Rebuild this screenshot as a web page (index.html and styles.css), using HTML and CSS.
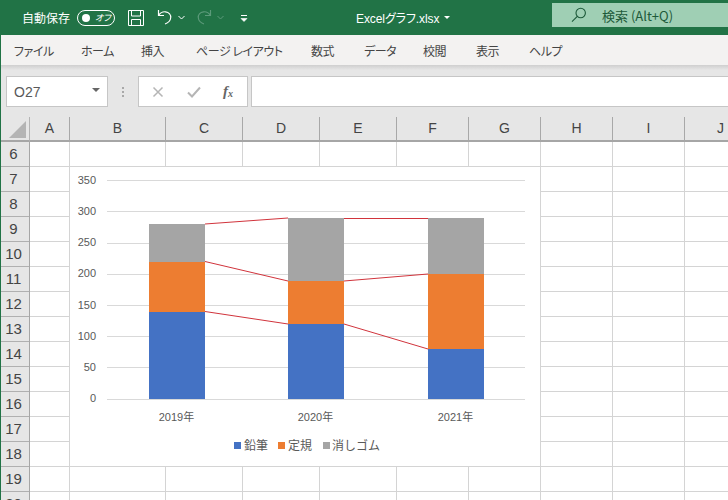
FILE: index.html
```html
<!DOCTYPE html>
<html lang="ja">
<head>
<meta charset="utf-8">
<title>Excelグラフ.xlsx</title>
<link rel="stylesheet" href="styles.css">
</head>
<body>
<div class="app">
  <header class="titlebar">
    <div class="qat">
      <span class="autosave">自動保存</span>
      <span class="toggle"><i class="knob"></i><em class="toggle-label">オフ</em></span>
      <svg class="ico save" width="17" height="17" viewBox="0 0 17 17" fill="none" stroke="#fff" stroke-width="1"><path d="M1.500 1.500h15v15h-15zM4.500 1.500v5.500h9v-5.500M4.500 16.500v-6h9v6"/></svg>
      <svg class="ico undo" width="16" height="17" viewBox="0 0 16 17" fill="none" stroke="#fff" stroke-width="1.2"><path d="M1.500 1v5.500h5.500M1.800 6.200C3.500 3.500 6 2.500 8.500 2.800c3.500.5 5.500 3.200 5.200 6-.3 3-2.600 5.200-5.700 6.200"/></svg>
      <svg class="ico chev" width="7" height="5" viewBox="0 0 7 5" fill="none" stroke="#fff"><path d="M.5 1l3 3 3-3"/></svg>
      <svg class="ico redo" width="16" height="17" viewBox="0 0 16 17" fill="none" stroke="#5c9a7a" stroke-width="1.2"><path d="M14.500 1v5.500H9M14.200 6.200C12.500 3.500 10 2.500 7.500 2.800c-3.500.5-5.500 3.200-5.200 6 .3 3 2.600 5.200 5.700 6.200"/></svg>
      <svg class="ico chev" width="7" height="5" viewBox="0 0 7 5" fill="none" stroke="#5c9a7a"><path d="M.5 1l3 3 3-3"/></svg>
      <svg class="ico custom" width="8" height="8" viewBox="0 0 8 8" fill="none" stroke="#fff"><path d="M1 .5h6"/><path d="M1 3.500l3 3 3-3z" fill="#fff" stroke-width=".6"/></svg>
    </div>
    <div class="doc"><span>Excelグラフ.xlsx</span><i class="caret"></i></div>
    <div class="search">
      <svg class="ico" width="16" height="16" viewBox="0 0 16 16" fill="none" stroke="#1d5a3a" stroke-width="1.1"><circle cx="9.700" cy="6" r="4.700"/><path d="M6.300 9.400L1 14.700"/></svg>
      <span>検索 (Alt+Q)</span>
    </div>
  </header>

  <nav class="ribbon">
    <span class="tab t1">ファイル</span>
    <span class="tab t2">ホーム</span>
    <span class="tab t3">挿入</span>
    <span class="tab t4">ページ レイアウト</span>
    <span class="tab t5">数式</span>
    <span class="tab t6">データ</span>
    <span class="tab t7">校閲</span>
    <span class="tab t8">表示</span>
    <span class="tab t9">ヘルプ</span>
  </nav>

  <section class="formulabar">
    <div class="namebox"><span>O27</span><i class="caret dark"></i></div>
    <div class="grip"><i></i><i></i><i></i></div>
    <div class="fxbox">
      <svg class="ico" width="12" height="12" viewBox="0 0 12 12" fill="none" stroke="#b5b5b5" stroke-width="1.5"><path d="M1.500 1.500l9 9M10.500 1.500l-9 9"/></svg>
      <svg class="ico" width="14" height="12" viewBox="0 0 14 12" fill="none" stroke="#b5b5b5" stroke-width="2"><path d="M1 6.500l4 4 8-9"/></svg>
      <span class="fx">f<sub>x</sub></span>
    </div>
    <div class="input"></div>
  </section>

  <section class="sheet">
    <div class="corner"><i></i></div>
    <div class="colhead">A</div>
    <div class="colhead">B</div>
    <div class="colhead">C</div>
    <div class="colhead">D</div>
    <div class="colhead">E</div>
    <div class="colhead">F</div>
    <div class="colhead">G</div>
    <div class="colhead">H</div>
    <div class="colhead">I</div>
    <div class="colhead">J</div>

    <div class="rownums">
      <div>6</div><div>7</div><div>8</div><div>9</div><div>10</div>
      <div>11</div><div>12</div><div>13</div><div>14</div><div>15</div>
      <div>16</div><div>17</div><div>18</div><div>19</div><div>20</div>
    </div>
    <div class="col"></div>
    <div class="col"></div>
    <div class="col"></div>
    <div class="col"></div>
    <div class="col"></div>
    <div class="col"></div>
    <div class="col"></div>
    <div class="col"></div>
    <div class="col"></div>
    <div class="col"></div>

    <svg class="chart" width="470" height="299" viewBox="70 167 470 299">
      <g class="grid">
        <path d="M107 180.500H525M107 211.500H525M107 243.500H525M107 274.500H525M107 305.500H525M107 336.500H525M107 367.500H525M107 399.500H525"/>
      </g>
      <g class="axis">
        <text x="96" y="184">350</text>
        <text x="96" y="215">300</text>
        <text x="96" y="246">250</text>
        <text x="96" y="277">200</text>
        <text x="96" y="309">150</text>
        <text x="96" y="340">100</text>
        <text x="96" y="371">50</text>
        <text x="96" y="402">0</text>
      </g>
      <rect class="s1" x="149" y="312" width="56" height="87"/>
      <rect class="s2" x="149" y="262" width="56" height="50"/>
      <rect class="s3" x="149" y="224" width="56" height="38"/>
      <rect class="s1" x="288" y="324" width="56" height="75"/>
      <rect class="s2" x="288" y="281" width="56" height="43"/>
      <rect class="s3" x="288" y="218" width="56" height="63"/>
      <rect class="s1" x="428" y="349" width="56" height="50"/>
      <rect class="s2" x="428" y="274" width="56" height="75"/>
      <rect class="s3" x="428" y="218" width="56" height="56"/>
      <g class="links">
        <path d="M205 311.500L288 324M344 324L428 349"/>
        <path d="M205 261.500L288 281M344 281L428 274"/>
        <path d="M205 224L288 218M344 218.500H428"/>
      </g>
      <g class="cats">
        <text x="176.500" y="421">2019年</text>
        <text x="315.500" y="421">2020年</text>
        <text x="455.500" y="421">2021年</text>
      </g>
      <rect class="s1" x="234" y="442" width="7" height="7"/>
      <text class="legend" x="244" y="450">鉛筆</text>
      <rect class="s2" x="278" y="442" width="7" height="7"/>
      <text class="legend" x="288" y="450">定規</text>
      <rect class="s3" x="323" y="442" width="7" height="7"/>
      <text class="legend" x="332" y="450">消しゴム</text>
    </svg>
  </section>
</div>
</body>
</html>
```
FILE: styles.css
```css
* { box-sizing: border-box; }
html, body { margin: 0; padding: 0; }
body {
  width: 728px;
  height: 500px;
  overflow: hidden;
  font-family: "Noto Sans CJK JP", "Noto Sans", sans-serif;
  font-feature-settings: "palt";
  background: #e6e6e6;
}
.app {
  height: 500px;
  border-left: 1px solid #217346;
  display: flex;
  flex-direction: column;
}
.ico { display: block; flex: none; }

/* title bar */
.titlebar {
  height: 35px;
  margin-left: -1px;
  background: #217346;
  color: #fff;
  display: flex;
  align-items: center;
  flex: none;
}
.qat {
  width: 356px;
  padding-left: 22px;
  display: flex;
  align-items: center;
  flex: none;
}
.autosave { font-size: 12px; width: 47px; white-space: nowrap; }
.toggle {
  width: 38px;
  height: 16px;
  margin-left: 8px;
  border: 1px solid #fff;
  border-radius: 8px;
  display: flex;
  align-items: center;
  padding-left: 4px;
}
.knob { width: 8px; height: 8px; border-radius: 50%; background: #fff; }
.toggle-label { font-size: 9px; margin-left: 5px; font-style: italic; line-height: 1; }
.save { margin-left: 12px; }
.undo { margin-left: 13px; }
.chev { margin-left: 5px; }
.redo { margin-left: 11px; }
.custom { margin-left: 16px; margin-top: 2px; }
.doc {
  width: 196px;
  font-size: 12px;
  letter-spacing: -.1px;
  font-family: "Liberation Sans", "Noto Sans CJK JP", sans-serif;
  display: flex;
  align-items: center;
  flex: none;
}
.caret {
  width: 0;
  height: 0;
  margin-left: 5px;
  border: 3.5px solid transparent;
  border-top: 3.5px solid #fff;
  border-bottom: 0;
}
.search {
  flex: 1;
  height: 24px;
  margin-top: -5px;
  background: #9fcfb4;
  color: #1d5a3a;
  font-size: 13px;
  display: flex;
  align-items: center;
  gap: 15px;
  padding-left: 19px;
}

/* ribbon */
.ribbon {
  height: 30px;
  background: #f3f2f1;
  display: flex;
  align-items: center;
  padding-left: 13px;
  font-size: 12px;
  letter-spacing: -.45px;
  color: #444;
  flex: none;
}
.tab { white-space: nowrap; flex: none; }
.t1 { width: 67px; }
.t2 { width: 60px; }
.t3 { width: 55px; }
.t4 { width: 115px; }
.t5 { width: 53px; }
.t6 { width: 59px; }
.t7 { width: 53px; }
.t8 { width: 53px; }

/* formula bar */
.formulabar {
  height: 52px;
  flex: none;
  padding-top: 11px;
  padding-left: 5px;
  display: flex;
  align-items: flex-start;
  background: linear-gradient(#cfcfcf 0, #e6e6e6 5px);
}
.namebox, .fxbox, .input {
  height: 31px;
  background: #fff;
  border: 1px solid #c6c6c6;
  display: flex;
  align-items: center;
}
.namebox {
  width: 102px;
  padding: 0 7px;
  font-size: 14px;
  color: #595959;
  justify-content: space-between;
  font-family: "Liberation Sans", sans-serif;
}
.caret.dark { border-top-color: #666; border-left-width: 4px; border-right-width: 4px; border-top-width: 4px; margin-top: -3px; }
.grip {
  width: 30px;
  flex: none;
  height: 31px;
  display: flex;
  flex-direction: column;
  align-items: center;
  justify-content: center;
  gap: 2px;
}
.grip i { width: 2px; height: 2px; background: #a8a8a8; }
.fxbox {
  width: 110px;
  padding-left: 13px;
  gap: 23px;
}
.fx {
  margin-left: -1px;
  font: italic 700 15px "Liberation Serif", serif;
  color: #666;
}
.fx sub { font-size: 10px; vertical-align: -1px; line-height: 0; }
.input { flex: 1; margin-left: 3px; border-right: 0; }

/* sheet */
.sheet {
  flex: 1;
  position: relative;
  overflow: hidden;
  display: grid;
  grid-template-columns: 29px 40px 96px 77px 77px 77px 72px 72px 72px 72px 72px;
  grid-template-rows: 25px 1fr;
  background: #fff;
}
.corner, .colhead {
  background: #e6e6e6;
  border-bottom: 2px solid #a6a6a6;
  position: relative;
}
.corner { border-right: 1px solid #b4b4b4; }
.corner i {
  position: absolute;
  left: 8px;
  top: 4px;
  border-left: 17px solid transparent;
  border-bottom: 17px solid #b4b4b4;
}
.colhead {
  border-right: 1px solid #a8a8a8;
  font: 14px "Liberation Sans", sans-serif;
  color: #444;
  text-align: center;
  line-height: 23px;
}
.colhead:last-of-type { border-right: 0; text-align: left; padding-left: 33px; }
.rownums {
  background: #e6e6e6;
  border-right: 1px solid #a6a6a6;
}
.rownums div {
  height: 25px;
  border-bottom: 1px solid #b0b0b0;
  text-align: center;
  font: 15px/24px "Liberation Sans", sans-serif;
  color: #444;
  padding-right: 3px;
}
.col {
  border-right: 1px solid #d4d4d4;
  background: repeating-linear-gradient(#fff 0, #fff 24px, #d4d4d4 24px, #d4d4d4 25px);
}

/* chart */
.chart {
  position: absolute;
  left: 69px;
  top: 50px;
  background: #fff;
}
.grid path { stroke: #d9d9d9; stroke-width: 1; fill: none; }
.axis text, .cats text, .legend {
  font-family: "Liberation Sans", "Noto Sans CJK JP", sans-serif;
  font-size: 11px;
  fill: #595959;
}
.axis text { text-anchor: end; }
.cats text { text-anchor: middle; }
.legend {
  font-family: "Noto Sans CJK JP", sans-serif;
  font-size: 12px;
  font-feature-settings: normal;
}
.s1 { fill: #4472c4; }
.s2 { fill: #ed7d31; }
.s3 { fill: #a5a5a5; }
.links path { stroke: #d1343c; stroke-width: 1; fill: none; }
```
